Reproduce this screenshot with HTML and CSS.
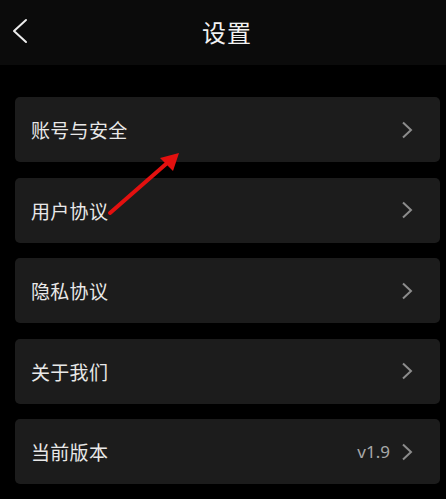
FILE: index.html
```html
<!DOCTYPE html>
<html lang="zh-CN">
<head>
<meta charset="utf-8">
<link rel="stylesheet" href="styles.css">
</head>
<body>
<div class="page">
  <header class="topbar">
    <span class="back">
      <svg width="16" height="26" viewBox="0 0 16 26"><polyline points="14,2 2,13 14,24" fill="none" stroke="#ececec" stroke-width="2" stroke-linecap="round" stroke-linejoin="round"/></svg>
    </span>
    <h1 class="title">设置</h1>
  </header>
  <main class="list">
    <div class="item"><span class="label">账号与安全</span><span class="right"><svg class="chev" width="12" height="18" viewBox="0 0 12 18"><polyline points="2,1.5 10,9 2,16.5" fill="none" stroke="#8c8c8c" stroke-width="2"/></svg></span></div>
    <div class="item"><span class="label">用户协议</span><span class="right"><svg class="chev" width="12" height="18" viewBox="0 0 12 18"><polyline points="2,1.5 10,9 2,16.5" fill="none" stroke="#8c8c8c" stroke-width="2"/></svg></span></div>
    <div class="item"><span class="label">隐私协议</span><span class="right"><svg class="chev" width="12" height="18" viewBox="0 0 12 18"><polyline points="2,1.5 10,9 2,16.5" fill="none" stroke="#8c8c8c" stroke-width="2"/></svg></span></div>
    <div class="item"><span class="label">关于我们</span><span class="right"><svg class="chev" width="12" height="18" viewBox="0 0 12 18"><polyline points="2,1.5 10,9 2,16.5" fill="none" stroke="#8c8c8c" stroke-width="2"/></svg></span></div>
    <div class="item"><span class="label">当前版本</span><span class="right"><span class="ver">v1.9</span><svg class="chev" width="12" height="18" viewBox="0 0 12 18"><polyline points="2,1.5 10,9 2,16.5" fill="none" stroke="#8c8c8c" stroke-width="2"/></svg></span></div>
  </main>
  <svg class="annot" width="446" height="499" viewBox="0 0 446 499">
    <line x1="110" y1="213" x2="166" y2="164" stroke="#e3100f" stroke-width="4" stroke-linecap="round"/>
    <polygon points="179,153 160,158 173,171" fill="#e3100f"/>
  </svg>
</div>
</body>
</html>
```
FILE: styles.css
```css
html, body {
  margin: 0;
  padding: 0;
  background: #000;
}
body {
  font-family: "Noto Sans CJK SC", "Noto Sans", sans-serif;
  width: 446px;
  height: 499px;
  overflow: hidden;
}
.page {
  position: relative;
  width: 446px;
  height: 499px;
}
.topbar {
  height: 65px;
  background: #0b0b0b;
  display: flex;
  align-items: center;
  justify-content: center;
  position: relative;
}
.back {
  position: absolute;
  left: 12px;
  top: 18px;
  display: flex;
}
.title {
  margin: 0 0 2px 8px;
  font-size: 24px;
  font-weight: 400;
  color: #f2f2f2;
  line-height: 1;
  letter-spacing: 1px;
}
.list {
  padding: 32px 6px 0 15px;
  display: flex;
  flex-direction: column;
  gap: 15.5px;
}
.item {
  height: 65px;
  background: #1c1c1c;
  border-radius: 5px;
  display: flex;
  align-items: center;
  justify-content: space-between;
  padding: 0 27px 0 16px;
}
.label {
  font-size: 19px;
  font-weight: 400;
  color: #e8e8e8;
  letter-spacing: 0.3px;
}
.right {
  display: flex;
  align-items: center;
  gap: 11px;
}
.ver {
  font-family: "Noto Sans", sans-serif;
  font-size: 17px;
  color: #a8a8a8;
}
.chev {
  display: block;
}
.annot {
  position: absolute;
  left: 0;
  top: 0;
  pointer-events: none;
}
```
